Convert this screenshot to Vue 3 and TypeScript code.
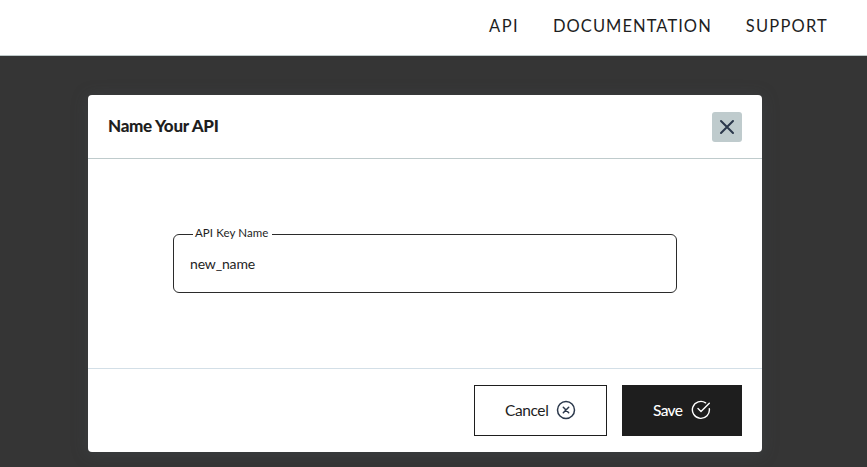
<script setup lang="ts">
import { ref } from 'vue'

const links: { label: string; key: string }[] = [
  { label: 'API', key: 'api' },
  { label: 'DOCUMENTATION', key: 'docs' },
  { label: 'SUPPORT', key: 'support' },
]
const name = ref<string>('new_name')
</script>

<template>
  <div class="page">
    <header class="topbar">
      <nav class="nav">
        <a v-for="link in links" :key="link.key" class="nav-link" :class="link.key">{{ link.label }}</a>
      </nav>
    </header>
    <main class="overlay">
      <section class="modal" role="dialog">
        <div class="modal-head">
          <h2 class="title">Name Your API</h2>
          <button class="close" type="button" aria-label="Close">
            <svg width="30" height="30" viewBox="0 0 30 30" fill="none" stroke="#2b384b" stroke-width="2" stroke-linecap="round">
              <path d="M9 9L21 21M21 9L9 21" />
            </svg>
          </button>
        </div>
        <div class="modal-body">
          <fieldset class="field">
            <legend class="legend"><span class="legend-text">API Key Name</span></legend>
            <input v-model="name" class="input" type="text" spellcheck="false" />
          </fieldset>
        </div>
        <div class="modal-foot">
          <button class="btn cancel" type="button">
            <span class="btn-text">Cancel</span>
            <svg width="20" height="20" viewBox="0 0 20 20" fill="none" stroke="#2b384b" stroke-width="1.5" stroke-linecap="round">
              <circle cx="10" cy="10" r="8.5" />
              <path d="M7.3 7.3L12.7 12.7M12.7 7.3L7.3 12.7" />
            </svg>
          </button>
          <button class="btn save" type="button">
            <span class="btn-text">Save</span>
            <svg width="20" height="20" viewBox="0 0 20 20" fill="none" stroke="#fff" stroke-width="1.4" stroke-linecap="round" stroke-linejoin="round">
              <path d="M18.3 8.6A8.5 8.5 0 1 1 14.6 2.8" />
              <path d="M7 8.6L10 11.6L18.3 3.3" />
            </svg>
          </button>
        </div>
      </section>
    </main>
  </div>
</template>

<style>
body {
  margin: 0;
  overflow: hidden;
}
</style>

<style scoped>
.page {
  height: 467px;
  display: flex;
  flex-direction: column;
  background: #353535;
  color: #1e1e1e;
  font-family: Lato, "Liberation Sans", sans-serif;
}
.topbar {
  box-sizing: border-box;
  height: 56px;
  flex: none;
  padding: 16px 39px 0 0;
  background: #fff;
  border-bottom: 1px solid #bec9c9;
}
.nav {
  display: flex;
  justify-content: flex-end;
  gap: 34px;
}
.nav-link {
  font-size: 16.5px;
  line-height: 21px;
  letter-spacing: 1.4px;
  white-space: nowrap;
}
.nav-link.docs {
  letter-spacing: 1.05px;
}
.nav-link.support {
  letter-spacing: 1.2px;
}
.overlay {
  flex: 1;
  padding: 39px 105px 15px 88px;
}
.modal {
  height: 357px;
  display: flex;
  flex-direction: column;
  background: #fff;
  border-radius: 4px;
  box-shadow: 0 2px 16px rgba(69, 80, 86, 0.35);
}
.modal-head {
  box-sizing: border-box;
  height: 64px;
  padding: 0 20px;
  display: flex;
  align-items: center;
  justify-content: space-between;
  border-bottom: 1px solid #bfcbcc;
}
.title {
  margin: 0;
  padding-bottom: 2px;
  font-size: 17px;
  line-height: 22px;
  font-weight: 900;
  letter-spacing: -0.3px;
}
.close {
  width: 30px;
  height: 30px;
  padding: 0;
  border: 0;
  border-radius: 3px;
  background: #bfcbcd;
}
.close svg,
.btn svg {
  display: block;
}
.modal-body {
  flex: 1;
  padding: 68px 85px 0;
}
.field {
  box-sizing: border-box;
  height: 66px;
  margin: 0;
  padding: 0 16px;
  border: 1px solid #2b2b2b;
  border-radius: 6px;
  min-width: 0;
}
.legend {
  height: 14px;
  margin-left: 3px;
  padding: 0 4px 0 2px;
}
.legend-text {
  display: block;
  font-size: 11.5px;
  line-height: 12px;
  letter-spacing: 0.08px;
  white-space: nowrap;
}
.input {
  display: block;
  width: 100%;
  height: 44px;
  padding: 0;
  border: 0;
  outline: 0;
  background: transparent;
  color: #1e1e1e;
  font: 14px Lato, "Liberation Sans", sans-serif;
  letter-spacing: -0.15px;
}
.modal-foot {
  box-sizing: border-box;
  height: 84px;
  padding: 16px 20px 0;
  display: flex;
  justify-content: flex-end;
  gap: 15px;
  border-top: 1px solid #d3dfe7;
}
.btn {
  box-sizing: border-box;
  height: 51px;
  padding: 0 30px 2px;
  display: flex;
  align-items: center;
  justify-content: space-between;
  border: 1px solid #1e1e1e;
  font: 15.5px/20px Lato, "Liberation Sans", sans-serif;
  letter-spacing: -0.4px;
}
.cancel {
  width: 133px;
  background: #fff;
  color: #1e1e1e;
}
.save {
  width: 120px;
  background: #1e1e1e;
  color: #fff;
}
.save .btn-text {
  font-weight: 500;
  letter-spacing: -0.65px;
}
</style>
